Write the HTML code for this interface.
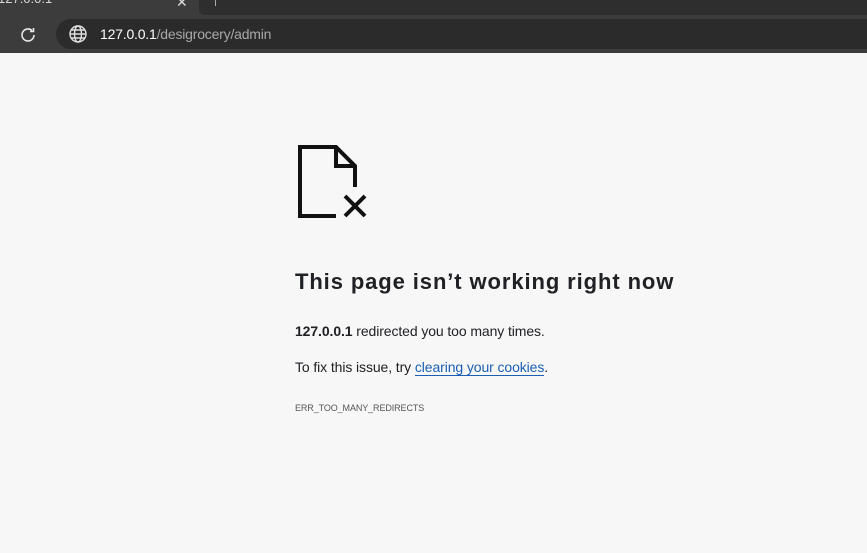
<!DOCTYPE html>
<html><head><meta charset="utf-8"><style>
*{margin:0;padding:0;box-sizing:border-box}
body{width:867px;height:553px;overflow:hidden;background:#f7f7f7;font-family:"Liberation Sans",sans-serif;position:relative}
.top{position:absolute;left:0;top:0;width:867px;height:53px;background:#3c3c3c}
.strip{position:absolute;left:199px;top:0;width:668px;height:15px;background:#2e2e2e;border-bottom-left-radius:6px}
.tabt{position:absolute;left:-2px;top:-9px;font-size:13px;color:#d8d8d8}
.x{position:absolute;left:176px;top:-6px;color:#ddd;font-size:14px}
.sep{position:absolute;left:215px;top:0;width:1px;height:6px;background:#aaa}
.addr{position:absolute;left:56px;top:19px;width:830px;height:30px;background:#2b2b2b;border-radius:15px}
.url{position:absolute;left:100px;top:26px;font-size:14px;color:#fff;letter-spacing:-0.2px}
.url span{color:#a8a8a8}
.bot{position:absolute;left:0;top:49px;width:867px;height:4px;background:#3c3c3c}
h1{position:absolute;left:295px;top:269px;font-size:22px;font-weight:bold;color:#202124;letter-spacing:0.9px;white-space:nowrap}
.p{position:absolute;left:295px;font-size:14px;color:#202124;white-space:nowrap;letter-spacing:-0.1px}
a{color:#1a5fb4;text-decoration:none;border-bottom:1px solid #1a5fb4}
.code{position:absolute;left:295px;top:403px;font-size:9px;color:#555;letter-spacing:-0.1px}
</style></head><body>
<div class="top"></div>
<div class="tabt">127.0.0.1</div>
<div class="x">✕</div>
<div class="strip"></div>
<div class="sep"></div>
<div class="addr"></div>
<div class="bot"></div>
<svg style="position:absolute;left:17px;top:24px" width="22" height="22" viewBox="0 0 22 22"><path d="M17 11a6 6 0 1 1-2-4.5" fill="none" stroke="#e8e8e8" stroke-width="1.6"/><path d="M16.5 4v3.5H13" fill="none" stroke="#e8e8e8" stroke-width="1.6"/></svg>
<svg style="position:absolute;left:68px;top:24px" width="20" height="20" viewBox="0 0 20 20" fill="none" stroke="#e0e0e0" stroke-width="1.4"><circle cx="10" cy="10" r="8"/><ellipse cx="10" cy="10" rx="3.5" ry="8"/><path d="M2 10h16M3.5 6h13M3.5 14h13"/></svg>
<div class="url">127.0.0.1<span>/desigrocery/admin</span></div>
<svg style="position:absolute;left:298px;top:145px" width="70" height="75" viewBox="0 0 70 75" fill="none" stroke="#111" stroke-width="4"><path d="M38 71H2V2h36l19 19v21"/><path d="M38 2v19h19"/><path d="M47 51l20 20M67 51L47 71"/></svg>
<h1>This page isn’t working right now</h1>
<div class="p" style="top:323px"><b>127.0.0.1</b> redirected you too many times.</div>
<div class="p" style="top:359px">To fix this issue, try <a>clearing your cookies</a>.</div>
<div class="code">ERR_TOO_MANY_REDIRECTS</div>
</body></html>
